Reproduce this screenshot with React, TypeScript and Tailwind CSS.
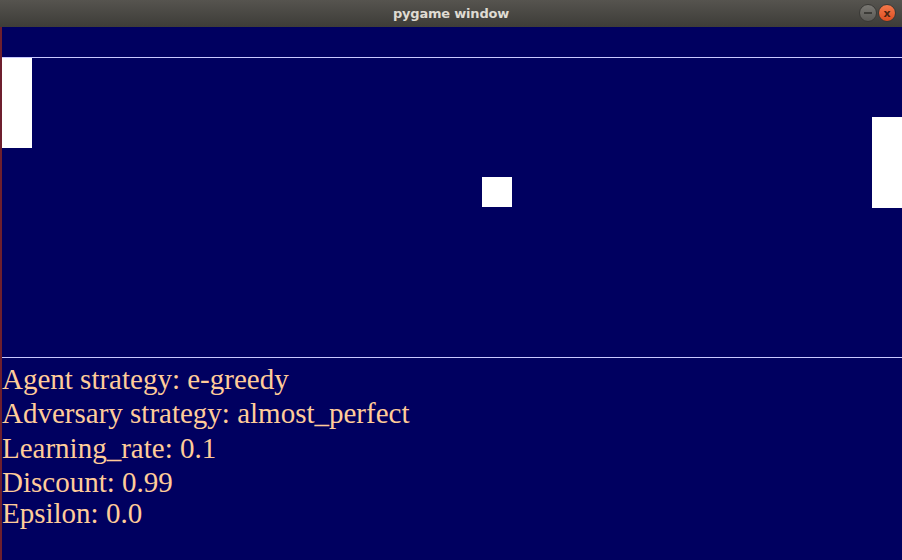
import React from 'react';

const stats = [
  { label: 'Agent strategy: e-greedy', h: 'h-[34px]' },
  { label: 'Adversary strategy: almost_perfect', h: 'h-[35px]' },
  { label: 'Learning_rate: 0.1', h: 'h-[34px]' },
  { label: 'Discount: 0.99', h: 'h-[31px]' },
  { label: 'Epsilon: 0.0', h: 'h-[34px]' },
];

const App = () => {
  return (
    <div className="flex h-[560px] w-[902px] flex-col overflow-hidden bg-[#000060]">
      {/* title bar */}
      <div className="relative flex h-[27px] shrink-0 items-center justify-center bg-gradient-to-b from-[#56544f] to-[#3d3c38]">
        <span className="font-['DejaVu_Sans',sans-serif] text-[13px] font-bold tracking-[-0.2px] text-[#dfdbd2]">
          pygame window
        </span>
        <div className="absolute right-[6px] top-[4px] flex gap-[1px]">
          <div className="flex h-[18px] w-[18px] items-center justify-center rounded-full border border-[#3a3936] bg-gradient-to-b from-[#7a7873] to-[#5a5955]">
            <div className="h-[2px] w-[8px] bg-[#3c3b37]" />
          </div>
          <div className="flex h-[18px] w-[18px] items-center justify-center rounded-full border border-[#3a3936] bg-gradient-to-b from-[#f4784a] to-[#de4d1f] text-[11px] font-bold leading-none text-[#4a2412] font-['DejaVu_Sans',sans-serif]">
            x
          </div>
        </div>
      </div>

      <div className="flex flex-1">
        <div className="w-[2px] shrink-0 bg-[#6e1f2e]" />
        <div className="flex flex-1 flex-col">
          <div className="h-[30px]" />
          <div className="h-px bg-[#c8c8ff]" />
          {/* playfield */}
          <div className="relative h-[299px]">
            <div className="absolute left-0 top-0 h-[90px] w-[30px] bg-white" />
            <div className="absolute left-[480px] top-[119px] h-[30px] w-[30px] bg-white" />
            <div className="absolute left-[870px] top-[59px] h-[91px] w-[30px] bg-white" />
          </div>
          <div className="h-px bg-[#c8c8ff]" />
          <div className="pt-[7px] font-['Liberation_Serif',serif] text-[29px] leading-[29px] text-[#ffcc99]">
            {stats.map((s) => (
              <div key={s.label} className={s.h}>
                {s.label}
              </div>
            ))}
          </div>
        </div>
      </div>
    </div>
  );
};

export default App;
